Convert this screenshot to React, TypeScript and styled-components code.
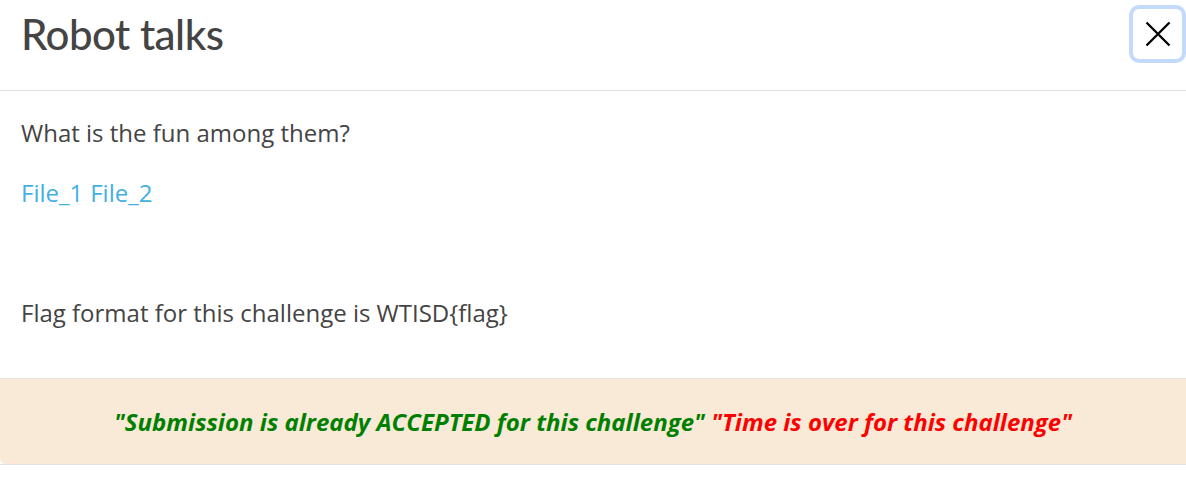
import React from "react";
import styled, { createGlobalStyle } from "styled-components";

const GlobalStyle = createGlobalStyle`
  html, body {
    margin: 0;
    padding: 0;
    background: #ffffff;
  }
  body {
    font-family: "Open Sans", "Liberation Sans", sans-serif;
    color: #444444;
  }
`;

const Modal = styled.div`
  width: 1186px;
  display: flex;
  flex-direction: column;
  background: #ffffff;
  border-bottom: 1px solid #e2e2e2;
`;

const Header = styled.header`
  height: 91px;
  box-sizing: border-box;
  display: flex;
  align-items: flex-start;
  justify-content: space-between;
  padding: 0 0 0 21px;
  border-bottom: 1px solid #e2e2e2;
`;

const Title = styled.h2`
  margin: 9px 0 0;
  font-family: "Lato", "Liberation Sans", sans-serif;
  font-weight: 500;
  font-size: 42px;
  line-height: 50px;
  color: #444444;
  letter-spacing: -0.5px;
`;

const CloseButton = styled.button`
  margin: 5px 0 0;
  width: 57px;
  height: 58px;
  box-sizing: border-box;
  display: flex;
  align-items: center;
  justify-content: center;
  background: #ffffff;
  border: 4px solid #c3dafd;
  border-radius: 10px;
  padding: 0;
  cursor: pointer;
`;

const Body = styled.section`
  padding: 24px 21px 23px;
`;

const Paragraph = styled.p`
  margin: 0 0 24px;
  font-size: 24px;
  line-height: 36px;
  color: #444444;
`;

const FileLink = styled.a`
  color: #42b0e3;
  text-decoration: none;
  margin-right: 7px;
`;

const Notice = styled.footer`
  background: #f9ead7;
  border-top: 1px solid #e2e2e2;
  border-bottom-left-radius: 5px;
  padding: 24px 0 24px;
  text-align: center;
  font-family: "Open Sans", "Liberation Sans", sans-serif;
  font-size: 24px;
  line-height: 37px;
  font-weight: 700;
  font-style: italic;
`;

const Status = styled.span<{ $tone: "ok" | "bad" }>`
  color: ${(p) => (p.$tone === "ok" ? "#008000" : "#ff0000")};
`;

const CloseIcon = () => (
  <svg width="26" height="26" viewBox="0 0 26 26" fill="none">
    <path d="M1.5 1.5 L24.5 24.5 M24.5 1.5 L1.5 24.5" stroke="#000" strokeWidth="2.3" />
  </svg>
);

export default function App() {
  return (
    <>
      <GlobalStyle />
      <Modal>
        <Header>
          <Title>Robot talks</Title>
          <CloseButton aria-label="Close">
            <CloseIcon />
          </CloseButton>
        </Header>
        <Body>
          <Paragraph>What is the fun among them?</Paragraph>
          <Paragraph>
            <FileLink href="#">File_1</FileLink>
            <FileLink href="#">File_2</FileLink>
          </Paragraph>
          <Paragraph>&nbsp;</Paragraph>
          <Paragraph>Flag format for this challenge is WTISD{"{flag}"}</Paragraph>
        </Body>
        <Notice>
          <Status $tone="ok">"Submission is already ACCEPTED for this challenge"</Status>{" "}
          <Status $tone="bad">"Time is over for this challenge"</Status>
        </Notice>
      </Modal>
    </>
  );
}
